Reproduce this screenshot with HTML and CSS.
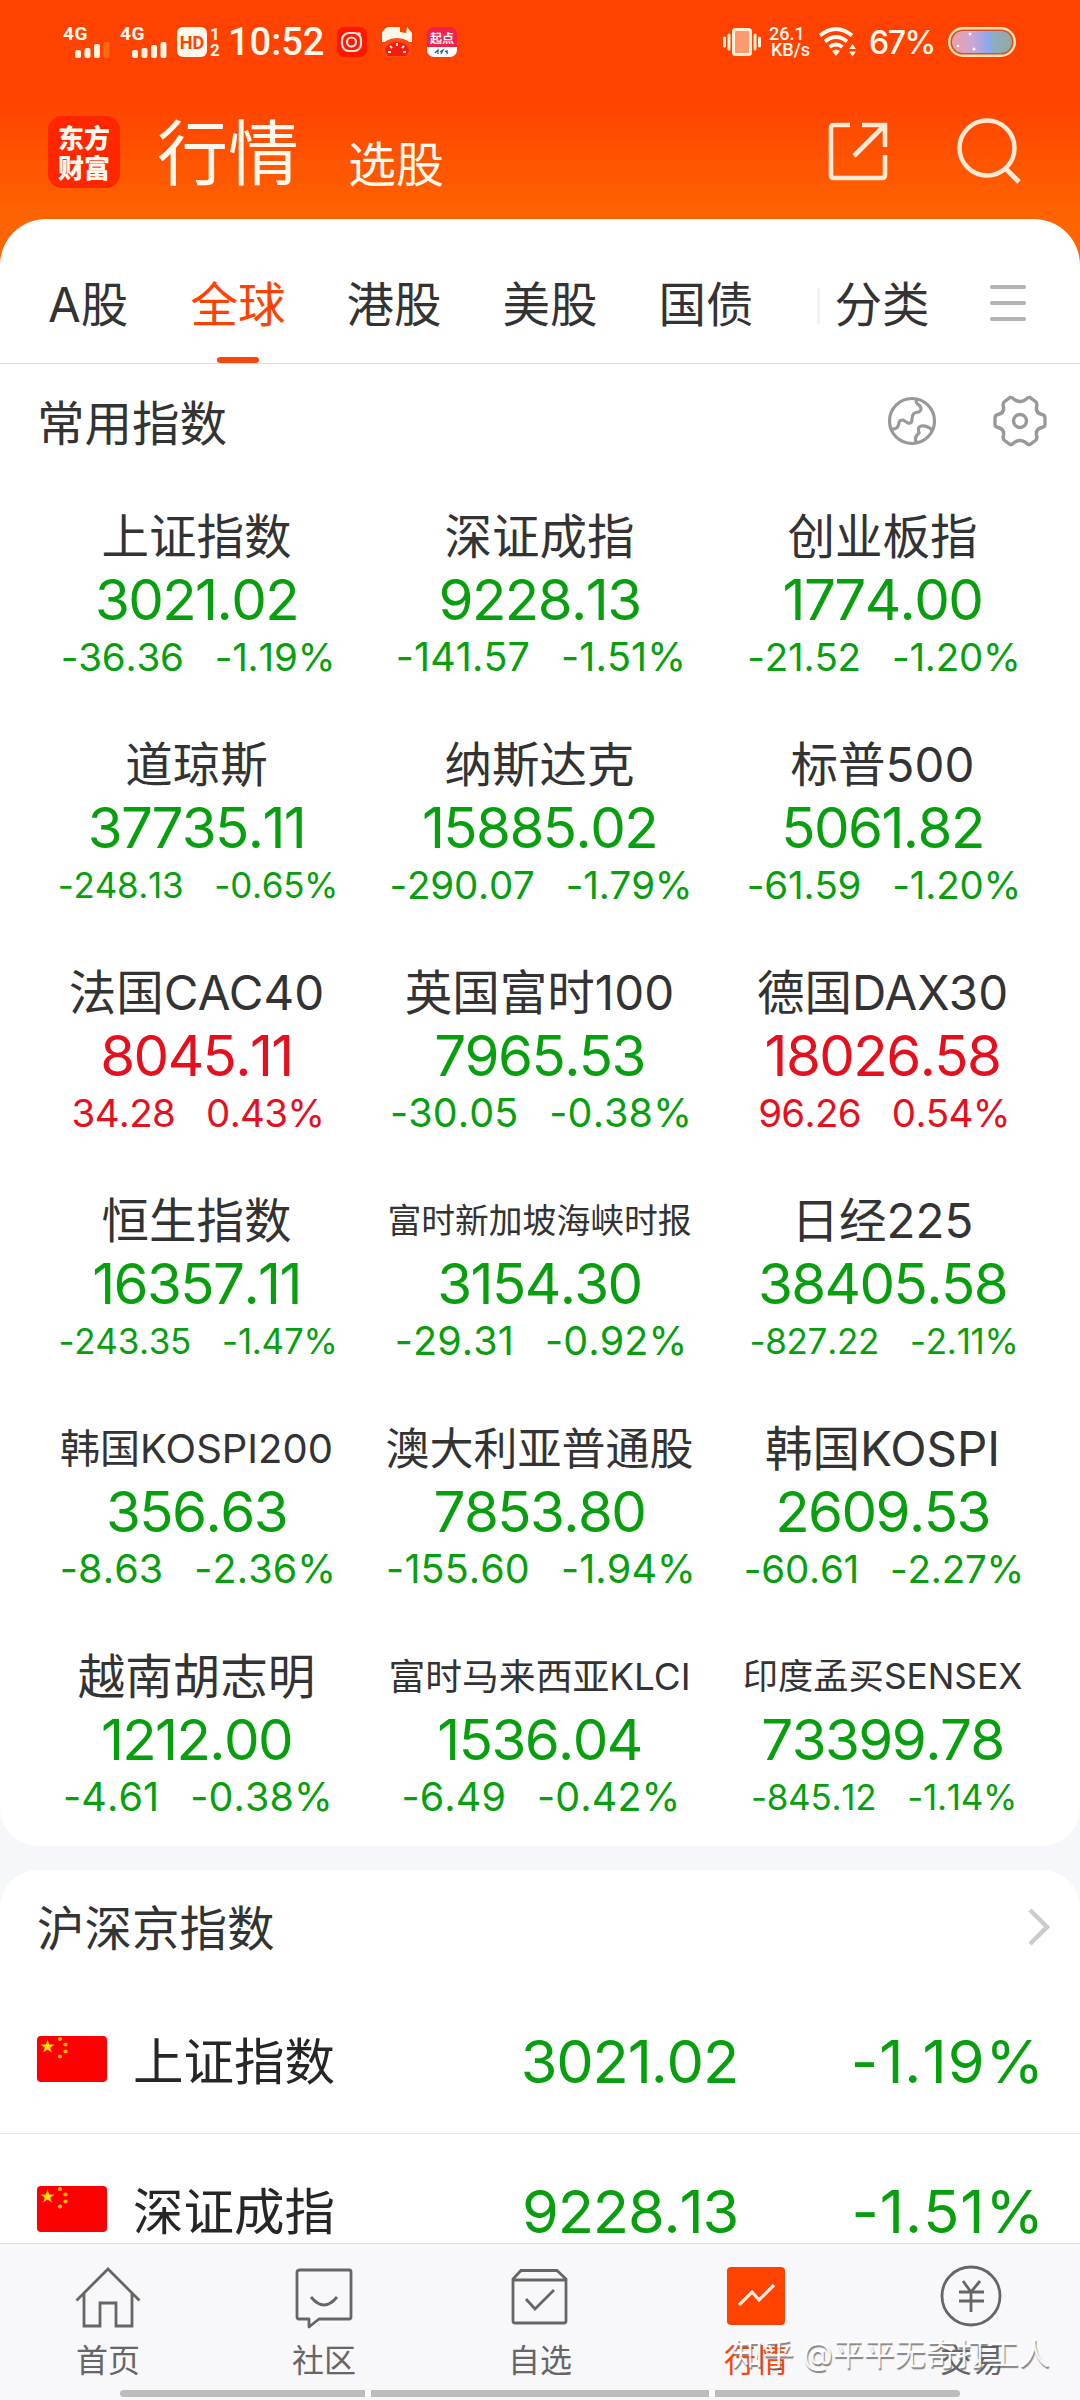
FILE: index.html
```html
<!DOCTYPE html>
<html lang="zh-CN">
<head>
<meta charset="utf-8">
<title>行情</title>
<link rel="stylesheet" href="styles.css">
</head>
<body>
<div class="screen">
  <header class="header">
    <div class="status">
      <div class="signal"><span class="net">4G</span>
        <svg class="bars" width="36" height="18" viewBox="0 0 36 18" fill="#fff3e0"><rect x="0" y="9" width="6" height="8" rx="2"/><rect x="9.500" y="7" width="6" height="10" rx="2"/><rect x="19" y="3" width="6" height="14" rx="2"/><rect x="28.500" y="1" width="6" height="16" rx="2" fill="#ff6a14"/></svg>
      </div>
      <div class="signal"><span class="net">4G</span>
        <svg class="bars" width="36" height="18" viewBox="0 0 36 18" fill="#fff3e0"><rect x="0" y="9" width="6" height="8" rx="2"/><rect x="9.500" y="7" width="6" height="10" rx="2"/><rect x="19" y="4" width="6" height="13" rx="2"/><rect x="28.500" y="1" width="6" height="16" rx="2"/></svg>
      </div>
      <span class="hd">HD</span>
      <span class="sims"><b>1</b><b>2</b></span>
      <span class="clock">10:52</span>
      <svg class="app" width="30" height="30" viewBox="0 0 30 30"><rect width="30" height="30" rx="7" fill="#ff1700"/><rect x="5" y="6" width="19" height="18" rx="7" fill="none" stroke="#ffe5dc" stroke-width="2.200"/><circle cx="14.500" cy="15" r="4.500" fill="none" stroke="#ffe5dc" stroke-width="2.200"/><circle cx="22" cy="7" r="1.800" fill="#ffe5dc"/></svg>
      <svg class="app" width="30" height="30" viewBox="0 0 30 30"><path d="M0 15V5L5 0h13v5l6 1 1-6 5 6v9z" fill="#fff6e8"/><path d="M0 20a15 9 0 0 1 30 0v3a7 7 0 0 1-7 7H7a7 7 0 0 1-7-7z" fill="#ff4a14"/><path d="M3 24a12 9 0 0 1 24 0l-3 5H6z" fill="#f41c10"/><path d="M8 19l2 2M15 16v3M22 19l-2 2M6 25h3M21 25h3" stroke="#fff0d0" stroke-width="2"/></svg>
      <svg class="app" width="30" height="30" viewBox="0 0 30 30"><rect width="30" height="30" rx="7" fill="#f0224c"/><path d="M0 20h30v3a7 7 0 0 1-7 7H7a7 7 0 0 1-7-7z" fill="#fff"/><text x="15" y="16" text-anchor="middle" font-size="12" font-weight="700" fill="#fff" textLength="24">起点</text><path d="M8 26l3-3v4m2-2 3-2-2 4m4-3 3 2m-1-3v4" stroke="#1b6580" stroke-width="1.200" fill="none"/></svg>
      <span class="grow"></span>
      <svg width="38" height="30" viewBox="0 0 38 30" fill="none"><path d="M1.500 11v8M6 8v14M32 8v14M36.500 11v8" stroke="#fff0d8" stroke-width="3" stroke-linecap="round"/><rect x="10.500" y="2.500" width="17" height="25" rx="2" fill="#ff9a70" stroke="#fff0d8" stroke-width="3"/></svg>
      <span class="speed"><span>26.1</span><span>KB/s</span></span>
      <svg class="wifi" width="40" height="30" viewBox="0 0 40 30" fill="none"><path d="M2 8.500Q18 -4.500 34 8.500M7 14.500Q18 5.500 29 14.500M11.500 20Q18 15 24.500 20" stroke="#fff8ec" stroke-width="3.800"/><path d="M14 24q4-3 8 0l-4 5zM31 22l3.500-5 3.500 5zM31 24.500l3.500 5 3.500-5z" fill="#fff0d8"/></svg>
      <span class="percent">67%</span>
      <svg class="battery" width="68" height="30" viewBox="0 0 68 30"><defs><linearGradient id="cell"><stop offset="0" stop-color="#eda0a6"/><stop offset=".35" stop-color="#c9a7d5"/><stop offset=".64" stop-color="#86a8ee"/><stop offset=".66" stop-color="#8cafc2"/><stop offset="1" stop-color="#98a8a2"/></linearGradient></defs><rect x="1.200" y="1.200" width="65.600" height="27.600" rx="13.800" fill="#d4502a" stroke="#ffe3b0" stroke-width="2.400"/><rect x="4" y="4" width="60" height="22" rx="11" fill="url(#cell)"/><g fill="#fff"><circle cx="22" cy="7" r="1.500"/><circle cx="10" cy="19" r="1.300"/><circle cx="26" cy="22" r="1.500"/></g></svg>
    </div>
    <div class="topbar">
      <div class="logo"><span>东方</span><span>财富</span></div>
      <h1>行情</h1>
      <span class="pick">选股</span>
      <span class="grow"></span>
      <svg class="share" width="60" height="62" viewBox="0 0 60 62" fill="none" stroke="#ffe9d2" stroke-width="4.600"><path d="M22 4H6Q3 4 3 7V54Q3 57 6 57H54Q57 57 57 54V34"/><path d="M34 4H57V26M26 35 56 5" /></svg>
      <svg class="search" width="66" height="68" viewBox="0 0 66 68" fill="none" stroke="#ffe9d2"><circle cx="31" cy="32" r="27.500" stroke-width="4.500"/><path d="M49 52 63 66" stroke-width="5"/></svg>
    </div>
  </header>

  <main>
    <section class="card first">
      <nav class="tabs">
        <a>A股</a><a class="on">全球</a><a>港股</a><a>美股</a><a>国债</a>
        <a class="sort">分类</a>
        <span class="menu"><i></i><i></i><i></i></span>
      </nav>
      <div class="title">
        <h2>常用指数</h2>
        <svg class="globe" width="50" height="50" viewBox="0 0 50 50" fill="none" stroke="#999" stroke-width="3.200"><circle cx="25" cy="25" r="22.500"/><path d="M29 3Q29 8 32 9Q36 13 32 16Q25 16 25 23Q25 28 21 27L16 24Q12 24 12 27Q11 34 4 33M45 34Q40 29 34 30Q30 31 32 37Q26 42 30 47"/></svg>
        <svg class="gear" width="54" height="52" viewBox="0 0 54 52" fill="none" stroke="#999" stroke-width="3.400" stroke-linejoin="round"><circle cx="27" cy="26" r="6.500"/><path d="M17 2.500Q19 2 22 5Q27 8 32 5Q35 2 37 2.500L43 7Q44.500 9 43.500 12Q42.500 18 49 19.500Q52 20 52 23V29Q52 32 49 32.500Q42.500 34 43.500 40Q44.500 43 43 45L37 49.500Q35 50 32 47Q27 44 22 47Q19 50 17 49.500L11 45Q9.500 43 10.500 40Q11.500 34 5 32.500Q2 32 2 29V23Q2 20 5 19.500Q11.500 18 10.500 12Q9.500 9 11 7Z"/></svg>
      </div>
      <div class="grid">
        <div class="cell"><b>上证指数</b><strong>3021.02</strong><p><span>-36.36</span><span>-1.19%</span></p></div>
        <div class="cell wide"><b>深证成指</b><strong>9228.13</strong><p><span>-141.57</span><span>-1.51%</span></p></div>
        <div class="cell"><b>创业板指</b><strong>1774.00</strong><p><span>-21.52</span><span>-1.20%</span></p></div>
        <div class="cell tight"><b>道琼斯</b><strong>37735.11</strong><p><span>-248.13</span><span>-0.65%</span></p></div>
        <div class="cell"><b>纳斯达克</b><strong>15885.02</strong><p><span>-290.07</span><span>-1.79%</span></p></div>
        <div class="cell"><b>标普500</b><strong>5061.82</strong><p><span>-61.59</span><span>-1.20%</span></p></div>
        <div class="cell up"><b>法国CAC40</b><strong>8045.11</strong><p><span>34.28</span><span>0.43%</span></p></div>
        <div class="cell wide"><b>英国富时100</b><strong>7965.53</strong><p><span>-30.05</span><span>-0.38%</span></p></div>
        <div class="cell up"><b>德国DAX30</b><strong>18026.58</strong><p><span>96.26</span><span>0.54%</span></p></div>
        <div class="cell tight"><b>恒生指数</b><strong>16357.11</strong><p><span>-243.35</span><span>-1.47%</span></p></div>
        <div class="cell wide"><b class="n34">富时新加坡海峡时报</b><strong>3154.30</strong><p><span>-29.31</span><span>-0.92%</span></p></div>
        <div class="cell tight"><b>日经225</b><strong>38405.58</strong><p><span>-827.22</span><span>-2.11%</span></p></div>
        <div class="cell wide"><b class="n40">韩国KOSPI200</b><strong>356.63</strong><p><span>-8.63</span><span>-2.36%</span></p></div>
        <div class="cell wide"><b class="n44">澳大利亚普通股</b><strong>7853.80</strong><p><span>-155.60</span><span>-1.94%</span></p></div>
        <div class="cell"><b>韩国KOSPI</b><strong>2609.53</strong><p><span>-60.61</span><span>-2.27%</span></p></div>
        <div class="cell wide"><b>越南胡志明</b><strong>1212.00</strong><p><span>-4.61</span><span>-0.38%</span></p></div>
        <div class="cell wide"><b class="n36">富时马来西亚KLCI</b><strong>1536.04</strong><p><span>-6.49</span><span>-0.42%</span></p></div>
        <div class="cell tight"><b class="n35">印度孟买SENSEX</b><strong>73399.78</strong><p><span>-845.12</span><span>-1.14%</span></p></div>
      </div>
    </section>

    <section class="card second">
      <div class="title">
        <h2>沪深京指数</h2>
        <svg class="chevron" width="24" height="40" viewBox="0 0 24 40" fill="none" stroke="#ccc" stroke-width="4.500"><path d="M3 3 20 20 3 37"/></svg>
      </div>
      <div class="row">
        <svg class="flag" width="70" height="46" viewBox="0 0 70 46"><rect width="70" height="46" rx="4" fill="#fb0000"/><path fill="#ffde00" d="M10.500 3.500 12.200 8.500H17.500L13.200 11.700 14.800 16.500 10.500 13.500 6.200 16.500 7.800 11.700 3.500 8.500H8.800Z"/><g fill="#ffb400"><circle cx="23" cy="3" r="2.100"/><circle cx="28.500" cy="8.500" r="2.100"/><circle cx="28.500" cy="15.500" r="2.100"/><circle cx="23" cy="20.500" r="2.100"/></g></svg>
        <b>上证指数</b><span class="price">3021.02</span><span class="change">-1.19%</span>
      </div>
      <div class="row">
        <svg class="flag" width="70" height="46" viewBox="0 0 70 46"><rect width="70" height="46" rx="4" fill="#fb0000"/><path fill="#ffde00" d="M10.500 3.500 12.200 8.500H17.500L13.200 11.700 14.800 16.500 10.500 13.500 6.200 16.500 7.800 11.700 3.500 8.500H8.800Z"/><g fill="#ffb400"><circle cx="23" cy="3" r="2.100"/><circle cx="28.500" cy="8.500" r="2.100"/><circle cx="28.500" cy="15.500" r="2.100"/><circle cx="23" cy="20.500" r="2.100"/></g></svg>
        <b>深证成指</b><span class="price">9228.13</span><span class="change">-1.51%</span>
      </div>
    </section>
  </main>

  <footer class="tabbar">
    <a><svg width="66" height="62" viewBox="0 0 66 62" fill="none" stroke="#666" stroke-width="2.800"><path d="M1.500 33.500 33 2 64.500 33.500M9 27V59H25V36H41V59H57V27"/></svg>首页</a>
    <a><svg width="66" height="62" viewBox="0 0 66 62" fill="none" stroke="#666" stroke-width="2.800" stroke-linejoin="round"><path d="M9 3H58Q60 3 60 5V50Q60 52 58 52H28L18 60V52H8Q6 52 6 50V5Q6 3 9 3Z"/><path d="M20 30Q33 46 46 30"/></svg>社区</a>
    <a><svg width="66" height="62" viewBox="0 0 66 62" fill="none" stroke="#666" stroke-width="2.800"><path d="M6 12 14 3.500H50L59 12V54Q59 56 57 56H8Q6 56 6 54ZM6 13H59M19 32 28 42 47 23"/></svg>自选</a>
    <a class="on"><svg width="66" height="62" viewBox="0 0 66 62"><rect x="4" y="0" width="58" height="58" rx="4" fill="#ff4200"/><path d="M16 38 29 25 36 33 51 18" fill="none" stroke="#ffeadb" stroke-width="3.200"/></svg>行情</a>
    <a><svg width="66" height="62" viewBox="0 0 66 62" fill="none" stroke="#666" stroke-width="2.800"><circle cx="32" cy="29" r="29"/><path d="M24 14 32 25 41 14M32 25V45M20 25H45M20 34H45"/></svg>交易</a>
    <div class="gesture"><i></i><i></i><i></i></div>
    <div class="watermark">知乎 @平平无奇打工人</div>
  </footer>
</div>
</body>
</html>
```
FILE: styles.css
```css
* { box-sizing: border-box; margin: 0; padding: 0; }
body { font-family: Inter, "Noto Sans CJK SC", sans-serif; color: #333; background: #f5f7fa; }
b, h1, h2, strong { font-weight: 400; }
svg { flex: none; display: block; overflow: visible; }
.screen { width: 1080px; height: 2400px; overflow: hidden; display: flex; flex-direction: column; }
.grow { flex: 1; }

.header { height: 270px; flex: none; background: linear-gradient(#ff4200 95px, #ff6400 220px); color: #fff8ec; }
.status { height: 84px; padding: 0 64px 0 63px; display: flex; align-items: center; }
.signal { width: 57px; height: 32px; }
.net { display: block; font: 700 19px/16px Roboto, sans-serif; letter-spacing: .5px; }
.bars { margin: -1px 0 0 12px; }
.hd { width: 30px; height: 30px; border-radius: 6px; background: #fff8ec; color: #ff4200; font: 700 18px/31px Roboto, sans-serif; text-align: center; }
.sims { width: 14px; margin-left: 1px; display: flex; flex-direction: column; align-items: center; }
.sims b { font: 700 17px/16px Roboto, sans-serif; }
.clock { width: 109px; margin-left: 6px; font: 500 38px/42px Roboto, sans-serif; }
.app { margin-right: 15px; }
.speed { width: 40px; margin-left: 8px; display: flex; flex-direction: column; font: 500 18px/16px Roboto, sans-serif; }
.speed span + span { padding-left: 2px; }
.wifi { margin-left: 9px; }
.percent { width: 66px; margin: 2px 0 0 11px; font: 500 32px/40px Inter, sans-serif; letter-spacing: -1.5px; white-space: nowrap; }
.battery { margin-left: 13px; }

.topbar { height: 135px; padding: 0 58px 0 48px; display: flex; align-items: center; }
.logo { width: 72px; height: 72px; border-radius: 14px; background: #ff2600; display: flex; flex-direction: column; align-items: center; justify-content: center; font: 900 26px/30px "Noto Sans CJK SC", sans-serif; }
h1 { margin: 2px 0 0 37px; font-size: 71px; line-height: 90px; }
.pick { margin: 26px 0 0 49px; font-size: 48px; line-height: 60px; }
.share { margin-right: 68px; }
.search { margin-top: -3px; }

.card { background: #fff; }
.first { height: 1627px; margin-top: -51px; position: relative; border-radius: 46px 46px 38px 38px; }
.tabs { height: 145px; padding: 0 54px 0 48px; border-bottom: 1px solid #ddd; display: flex; align-items: stretch; }
.tabs a { width: 156px; text-align: center; font-size: 47.5px; line-height: 172px; white-space: nowrap; }
.tabs a:first-child { width: 80px; margin-right: 32px; }
.tabs .on { color: #ff4200; display: flex; flex-direction: column; align-items: center; height: 144px; }
.tabs .on::after { content: ""; width: 42px; height: 6px; flex: none; margin-top: -34px; border-radius: 3px; background: #f4480e; }
.tabs .sort { width: 118px; margin-left: 32px; padding-left: 14px; background: linear-gradient(#f2f2f2, #f2f2f2) 1px 69px / 3px 36px no-repeat; }
.menu { width: 36px; margin: 66px 0 0 auto; display: flex; flex-direction: column; gap: 12px; }
.menu i { height: 4px; border-radius: 2px; background: #b3b3b3; }
.title { height: 116px; padding: 0 33px 0 37px; display: flex; align-items: center; }
h2 { flex: 1; font-size: 47.5px; margin-top: -3px; }
.globe { margin-right: 56px; }
.globe, .gear { margin-top: -2px; }
.grid { padding: 26px 25px 0; display: grid; grid-template-columns: repeat(3, 343px); grid-auto-rows: 178px; row-gap: 50px; color: #079f0e; }
.cell { display: flex; flex-direction: column; align-items: center; white-space: nowrap; }
.cell b { height: 62px; line-height: 62px; font-size: 47.5px; color: #333; }
.cell strong { font-size: 56.5px; line-height: 64px; height: 62px; letter-spacing: -1.6px; font-kerning: none; }
.cell p { display: flex; gap: 31px; padding-left: 3px; font-size: 38.5px; line-height: 54px; letter-spacing: -.2px; font-kerning: none; }
.cell.tight p { font-size: 35px; letter-spacing: -.3px; }
.cell.wide p { font-size: 39.5px; letter-spacing: .1px; }
.cell.up p { letter-spacing: -.7px; }
.up { color: #e60f1e; }
.cell .n34 { font-size: 33.8px; }
.cell .n35 { font-size: 35.3px; }
.cell .n36 { font-size: 36.8px; }
.cell .n40 { font-size: 40px; }
.cell .n44 { font-size: 44px; }

.second { height: 420px; margin-top: 24px; border-radius: 38px 38px 0 0; }
.second .title { height: 114px; padding-left: 37px; padding-right: 29px; }
.row { height: 150px; padding: 0 32px 0 37px; border-bottom: 1px solid #e8e8e8; display: flex; align-items: center; white-space: nowrap; }
.flag { margin-top: 0; }
.row b { flex: none; width: 260px; margin-left: 26px; margin-top: -1px; font-size: 50.5px; color: #262626; }
.price, .change { flex: none; width: 345px; text-align: right; font-size: 59.5px; color: #079f0e; margin-top: 4px; letter-spacing: -1.2px; font-kerning: none; }
.change { width: 307px; letter-spacing: 1px; }

.tabbar { height: 157px; flex: none; margin-top: auto; position: relative; z-index: 1; background: #f8f8fa; border-top: 1px solid #dcdcde; display: grid; grid-template-columns: repeat(5, 216px); }
.tabbar a { display: flex; flex-direction: column; align-items: center; padding-top: 23px; font-size: 32px; line-height: 63px; color: #666; height: 156px; }
.tabbar .on { color: #f5480d; }
.gesture { position: absolute; left: 120px; right: 120px; top: 146px; display: flex; gap: 6px; background: #fff; border-radius: 4px; }
.gesture i { width: 245px; height: 7px; background: #bcbcbc; border-radius: 4px 0 0 4px; }
.gesture i:nth-child(2) { width: 338px; border-radius: 0; }
.gesture i:last-child { border-radius: 0 4px 4px 0; }
.watermark { position: absolute; left: 732px; top: 88px; font-size: 31px; line-height: 44px; white-space: nowrap; color: rgba(255,255,255,.92); text-shadow: 1px 2px 1px rgba(80,80,80,.7); }
main { height: 2020px; flex: none; margin-bottom: -60px; }
```
